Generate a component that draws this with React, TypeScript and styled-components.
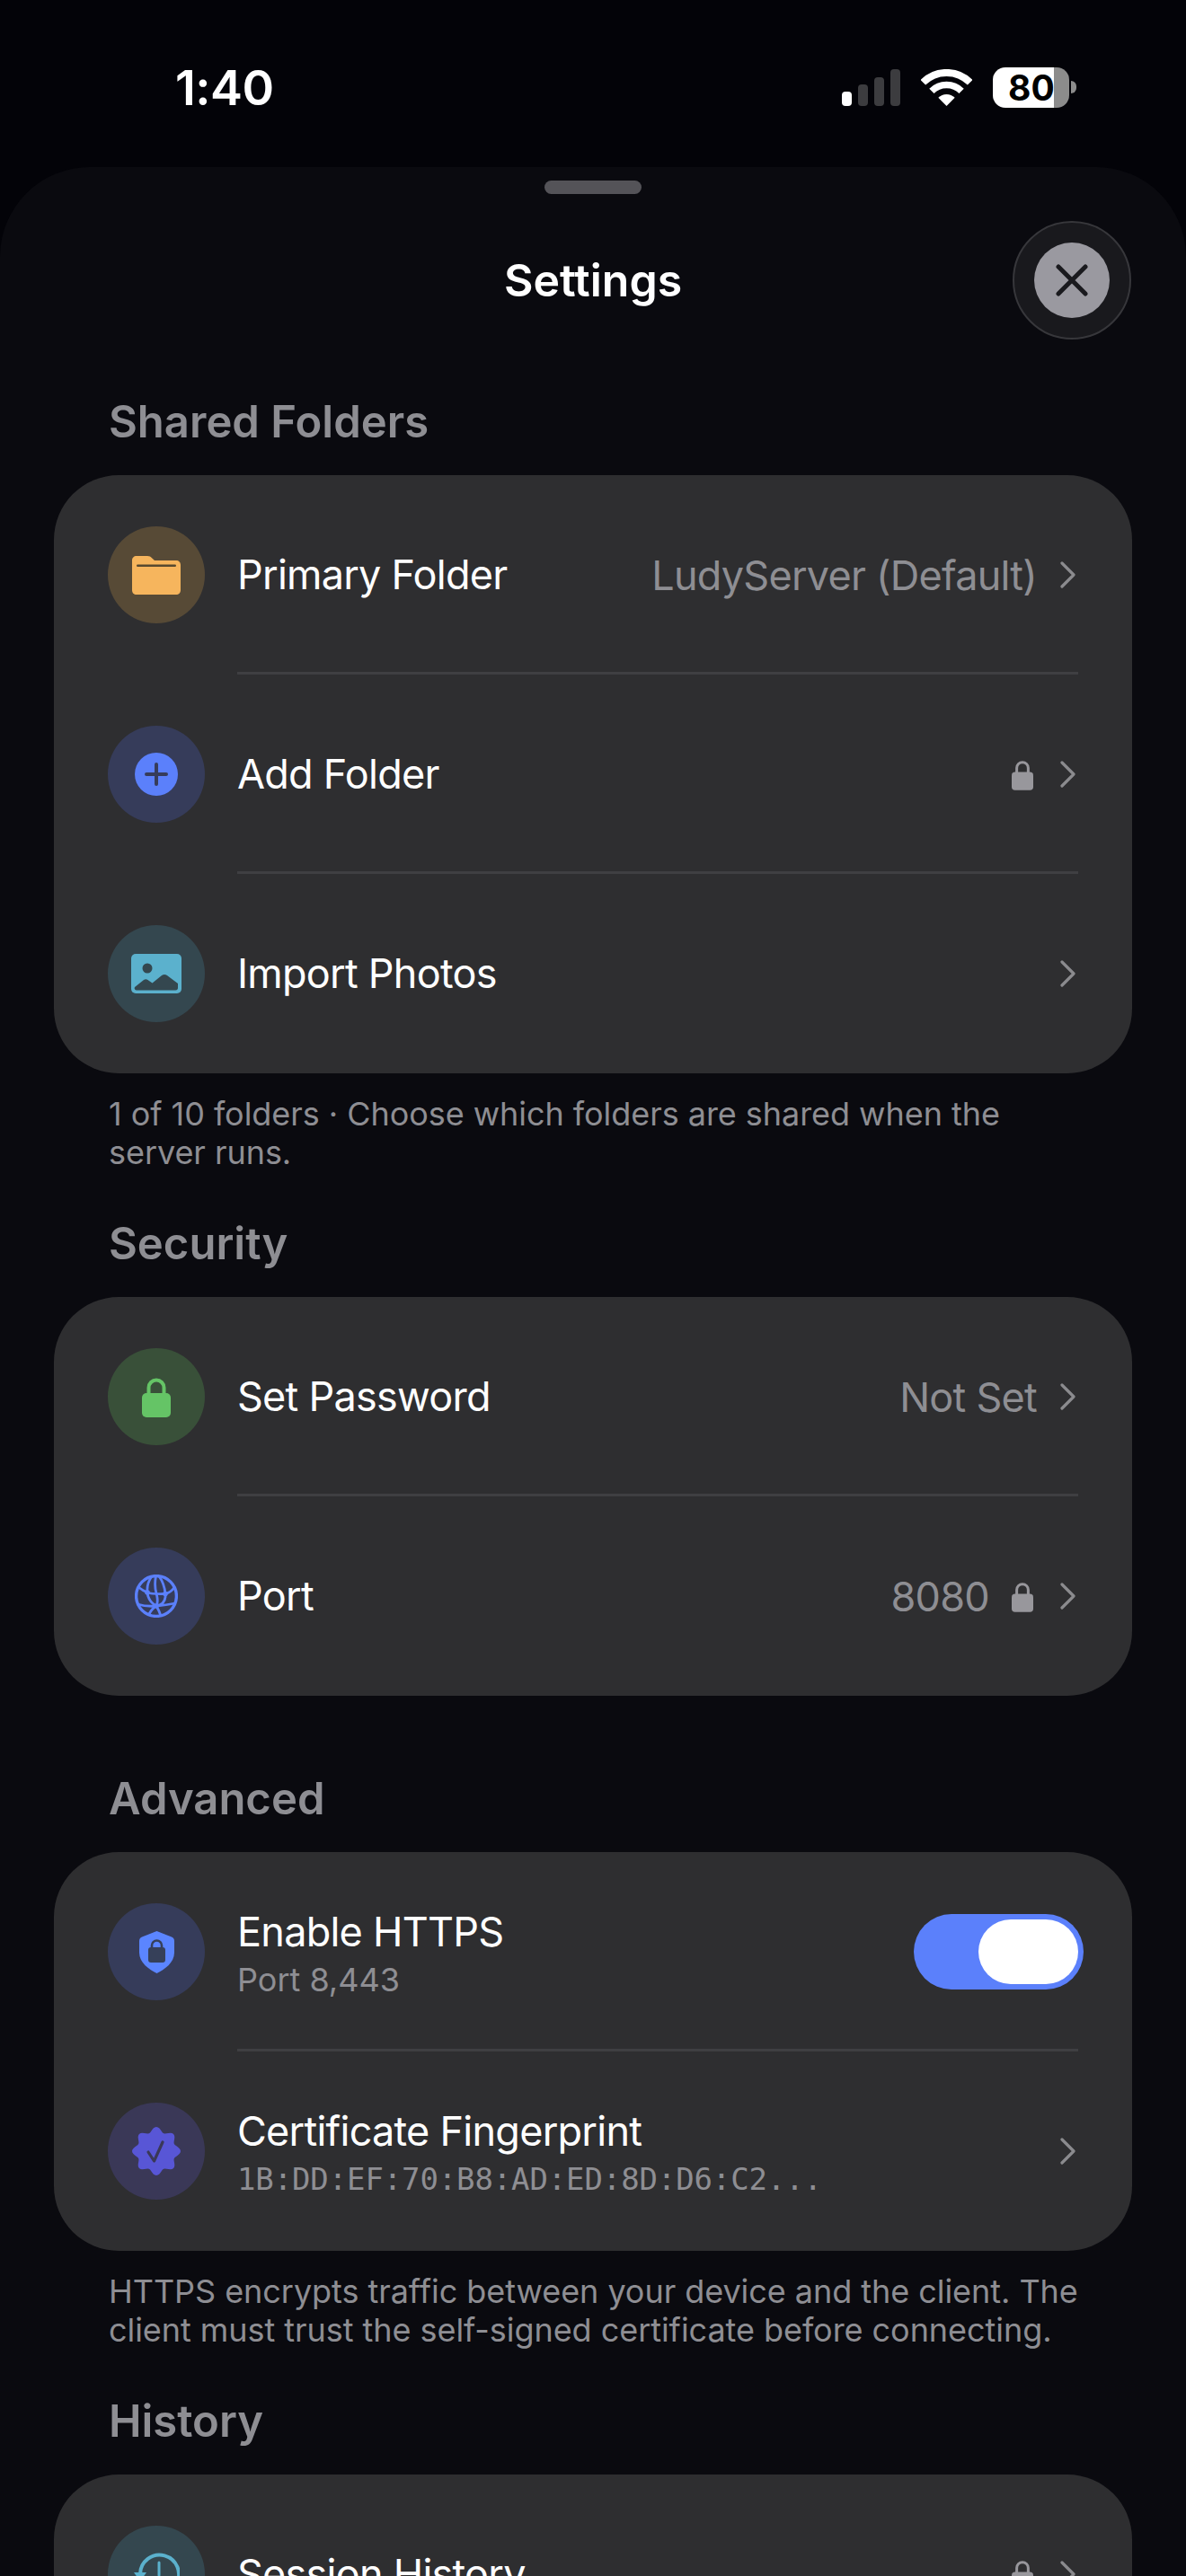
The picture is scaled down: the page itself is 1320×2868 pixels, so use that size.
import { ReactNode } from "react";
import styled, { createGlobalStyle } from "styled-components";

const COLOR_BLUE = "#5b80fb";
const COLOR_TEAL = "#5bb1cd";
const COLOR_GRAY = "#8e8e93";

const GlobalStyle = createGlobalStyle`
  html, body, #root {
    margin: 0;
    padding: 0;
    width: 1320px;
    height: 2868px;
    overflow: hidden;
    background: #030308;
  }
  * {
    box-sizing: border-box;
  }
  body {
    font-family: Inter, "Noto Sans", sans-serif;
    color: #fff;
  }
`;

const FolderIcon = () => (
  <svg width="54" height="43" viewBox="0 0 54 43">
    <path
      d="M5 0h12c2.5 0 3.6.8 5 2.2L25 5h24c3 0 5 2 5 5v28c0 3-2 5-5 5H5c-3 0-5-2-5-5V5c0-3 2-5 5-5z"
      fill="#f6b55d"
    />
    <rect x="5" y="9.5" width="44" height="2.6" rx="1.3" fill="#57492f" />
  </svg>
);

const PlusIcon = () => (
  <svg width="48" height="48" viewBox="0 0 48 48">
    <circle cx="24" cy="24" r="24" fill={COLOR_BLUE} />
    <path d="M24 13v22M13 24h22" stroke="#363c5a" strokeWidth="4" strokeLinecap="round" />
  </svg>
);

const PhotoIcon = () => (
  <svg width="56" height="44" viewBox="0 0 56 44">
    <rect width="56" height="44" rx="5" fill={COLOR_TEAL} />
    <circle cx="18" cy="16" r="5.5" fill="#34474f" />
    <path
      d="M4 37l10-8c1.5-1 3-1 4.5 0l5 3.5L34 24c2-1.5 4-1.5 6 0l12 9v5c0 1.5-1 2.5-2.5 2.5h-43C4.5 40.5 3 39 4 37z"
      fill="#34474f"
    />
  </svg>
);

const LockIcon = ({ color, width, height }: { color: string; width: number; height: number }) => (
  <svg width={width} height={height} viewBox="0 0 32 46">
    <path d="M7.5 22V13a8.5 8.5 0 0 1 17 0v9" fill="none" stroke={color} strokeWidth="4" />
    <rect y="19" width="32" height="27" rx="5" fill={color} />
  </svg>
);

const GlobeIcon = () => (
  <svg width="48" height="48" viewBox="0 0 48 48" fill="none" stroke={COLOR_BLUE} strokeWidth="2.8">
    <circle cx="24" cy="24" r="22.4" strokeWidth="3.4" />
    <path d="M4 14q5 4 10 6t20 1.5q6-1.5 10-7" />
    <path d="M3 33q10 3 21 2t21-3" />
    <path d="M19 2q-6 8-5 18t10 15q3 5 5 11" />
    <path d="M27 2q6 8 7 19.5T24 35q-5 3-8 9" />
    <path d="M23.5 2q-2 10 .5 19t0 14" />
    <circle cx="14" cy="20" r="2.8" fill={COLOR_BLUE} stroke="none" />
    <circle cx="34" cy="21.5" r="2.8" fill={COLOR_BLUE} stroke="none" />
    <circle cx="24" cy="35" r="2.8" fill={COLOR_BLUE} stroke="none" />
  </svg>
);

const ShieldIcon = () => (
  <svg width="39" height="47" viewBox="0 0 39 47">
    <path
      d="M19.5 0L36 6.5Q39 7.7 39 11V24C39 35 28 43 19.5 47 11 43 0 35 0 24V11Q0 7.7 3 6.5z"
      fill="#5b85ff"
    />
    <path d="M14 19v-3a5.5 5.5 0 0 1 11 0v3" fill="none" stroke="#364059" strokeWidth="2.6" />
    <rect x="10" y="18" width="19" height="17" rx="3" fill="#364059" />
  </svg>
);

// eight soft points round a circle, like the iOS verified badge
const sealPath = () => {
  const points: string[] = [];
  for (let i = 0; i < 96; i++) {
    const angle = (i / 96) * Math.PI * 2;
    const radius = 24.2 + 2.8 * Math.cos(angle * 8);
    points.push(`${(27 + radius * Math.sin(angle)).toFixed(2)} ${(27 - radius * Math.cos(angle)).toFixed(2)}`);
  }
  return `M${points.join("L")}Z`;
};

const SealIcon = () => (
  <svg width="54" height="54" viewBox="0 0 54 54">
    <path d={sealPath()} fill="#5856d6" />
    <path
      d="M18 28l6.5 10L34 17"
      fill="none"
      stroke="#3a3857"
      strokeWidth="3.2"
      strokeLinecap="round"
      strokeLinejoin="round"
    />
  </svg>
);

const HistoryIcon = () => (
  <svg width="52" height="48" viewBox="0 0 52 48" fill="none" stroke={COLOR_TEAL} strokeWidth="4">
    <path d="M8 24a21.5 21.5 0 1 1 6 15" strokeLinecap="round" />
    <path d="M29 11v14" strokeLinecap="round" strokeWidth="3" />
    <path d="M1 22h14l-7 10z" fill={COLOR_TEAL} stroke="none" />
  </svg>
);

const Chevron = () => (
  <svg width="17" height="30" viewBox="0 0 17 30" fill="none">
    <path
      d="M2 2l13 13L2 28"
      stroke="#8b8b8e"
      strokeWidth="3.2"
      strokeLinecap="round"
      strokeLinejoin="round"
    />
  </svg>
);

const WifiIcon = () => (
  <svg width="57" height="41" viewBox="0 0 57 41" fill="none" stroke="#fff">
    <path d="M2.3 14.8a37 37 0 0 1 52.4 0" strokeWidth="8" />
    <path d="M11.9 24.4a23.5 23.5 0 0 1 33.2 0" strokeWidth="7.5" />
    <path d="M28.5 41l-9.2-9.2a13 13 0 0 1 18.4 0z" fill="#fff" stroke="none" />
  </svg>
);

interface SettingRowProps {
  icon: ReactNode;
  iconBg: string;
  title: string;
  subtitle?: string;
  mono?: boolean;
  value?: string;
  locked?: boolean;
  toggle?: boolean;
}

const SettingRow = ({ icon, iconBg, title, subtitle, mono, value, locked, toggle }: SettingRowProps) => (
  <Row>
    <IconCircle $bg={iconBg}>{icon}</IconCircle>
    <RowText>
      <RowTitle>{title}</RowTitle>
      {subtitle && <RowSubtitle $mono={mono}>{subtitle}</RowSubtitle>}
    </RowText>
    {toggle ? (
      <Switch>
        <Knob />
      </Switch>
    ) : (
      <RowAccessory>
        {value && <RowValue>{value}</RowValue>}
        {locked && (
          <LockSlot>
            <LockIcon color="#98979c" width={24} height={35} />
          </LockSlot>
        )}
        <Chevron />
      </RowAccessory>
    )}
  </Row>
);

const App = () => (
  <Screen>
    <GlobalStyle />
    <StatusBar>
      <Time>1:40</Time>
      <StatusIcons>
        <Signal>
          <SignalBar $height={16} $active />
          <SignalBar $height={24} />
          <SignalBar $height={32} />
          <SignalBar $height={41} />
        </Signal>
        <WifiIcon />
        <Battery>
          <BatteryBody>80</BatteryBody>
          <BatteryNub />
        </Battery>
      </StatusIcons>
    </StatusBar>
    <Sheet>
      <Handle />
      <Header>
        <Title>Settings</Title>
        <CloseRing>
          <CloseButton>
            <svg width="36" height="36" viewBox="0 0 36 36">
              <path
                d="M3 3l30 30M33 3L3 33"
                stroke="#1a1a1e"
                strokeWidth="5"
                strokeLinecap="round"
              />
            </svg>
          </CloseButton>
        </CloseRing>
      </Header>

      <Section $hasNote>
        <SectionHeading>Shared Folders</SectionHeading>
        <Card>
          <SettingRow
            icon={<FolderIcon />}
            iconBg="#574a36"
            title="Primary Folder"
            value="LudyServer (Default)"
          />
          <Divider />
          <SettingRow icon={<PlusIcon />} iconBg="#363c5a" title="Add Folder" locked />
          <Divider />
          <SettingRow icon={<PhotoIcon />} iconBg="#34474f" title="Import Photos" />
        </Card>
        <Note>1 of 10 folders · Choose which folders are shared when the server runs.</Note>
      </Section>

      <Section>
        <SectionHeading>Security</SectionHeading>
        <Card>
          <SettingRow
            icon={<LockIcon color="#65c466" width={32} height={46} />}
            iconBg="#395039"
            title="Set Password"
            value="Not Set"
          />
          <Divider />
          <SettingRow icon={<GlobeIcon />} iconBg="#363c5a" title="Port" value="8080" locked />
        </Card>
      </Section>

      <Section $hasNote>
        <SectionHeading>Advanced</SectionHeading>
        <Card>
          <SettingRow
            icon={<ShieldIcon />}
            iconBg="#363c5a"
            title="Enable HTTPS"
            subtitle="Port 8,443"
            toggle
          />
          <Divider />
          <SettingRow
            icon={<SealIcon />}
            iconBg="#3a3857"
            title="Certificate Fingerprint"
            subtitle="1B:DD:EF:70:B8:AD:ED:8D:D6:C2..."
            mono
          />
        </Card>
        <Note>
          HTTPS encrypts traffic between your device and the client. The client must trust the
          self-signed certificate before connecting.
        </Note>
      </Section>

      <Section>
        <SectionHeading>History</SectionHeading>
        <Card>
          <SettingRow icon={<HistoryIcon />} iconBg="#34474f" title="Session History" locked />
        </Card>
      </Section>
    </Sheet>
  </Screen>
);

export default App;

const Screen = styled.div`
  width: 1320px;
  height: 2868px;
  overflow: hidden;
  display: flex;
  flex-direction: column;
`;

const StatusBar = styled.div`
  height: 186px;
  flex-shrink: 0;
  display: flex;
  align-items: center;
  justify-content: space-between;
  padding: 10px 122px 0 195px;
`;

const Time = styled.div`
  font-size: 54px;
  font-weight: 600;
  line-height: 60px;
  letter-spacing: -0.5px;
`;

const StatusIcons = styled.div`
  display: flex;
  align-items: center;
  gap: 23px;
  margin-top: -2px;
`;

const Signal = styled.div`
  display: flex;
  align-items: flex-end;
  gap: 7px;
  height: 41px;
`;

const SignalBar = styled.div<{ $height: number; $active?: boolean }>`
  width: 11px;
  height: ${({ $height }) => $height}px;
  border-radius: 4px;
  background: ${({ $active }) => ($active ? "#fff" : "#3c3c3f")};
`;

const Battery = styled.div`
  display: flex;
  align-items: center;
  gap: 2px;
`;

const BatteryBody = styled.div`
  width: 85px;
  height: 45px;
  border-radius: 14px;
  background: linear-gradient(90deg, #fff 80%, #8c8c8c 80%);
  color: #000;
  font-size: 39px;
  font-weight: 700;
  line-height: 45px;
  padding-left: 17px;
`;

const BatteryNub = styled.div`
  width: 6px;
  height: 14px;
  border-radius: 0 6px 6px 0;
  background: #8c8c8c;
`;

const Sheet = styled.div`
  flex: 1;
  background: #0a0a0f;
  border-radius: 100px 100px 0 0;
  padding: 15px 60px 0;
  display: flex;
  flex-direction: column;
`;

const Handle = styled.div`
  width: 108px;
  height: 15px;
  flex-shrink: 0;
  border-radius: 8px;
  background: #545358;
  align-self: center;
`;

const Header = styled.div`
  display: grid;
  grid-template-columns: 132px 1fr 132px;
  align-items: center;
  margin-top: 30px;
  margin-bottom: 62px;
`;

const Title = styled.h1`
  grid-column: 2;
  margin: 0;
  font-size: 50px;
  font-weight: 600;
  line-height: 60px;
  text-align: center;
`;

const CloseRing = styled.div`
  grid-column: 3;
  width: 132px;
  height: 132px;
  margin-left: -1px;
  border-radius: 50%;
  background: #19191d;
  border: 2px solid #37373b;
  display: flex;
  align-items: center;
  justify-content: center;
`;

const CloseButton = styled.div`
  width: 84px;
  height: 84px;
  border-radius: 50%;
  background: #9a99a0;
  display: flex;
  align-items: center;
  justify-content: center;
`;

const Section = styled.section<{ $hasNote?: boolean }>`
  flex-shrink: 0;
  margin-bottom: ${({ $hasNote }) => ($hasNote ? 50 : 85)}px;
`;

const SectionHeading = styled.h2`
  margin: 0 0 29px 61px;
  color: ${COLOR_GRAY};
  font-size: 49px;
  font-weight: 600;
  line-height: 60px;
`;

const Card = styled.div`
  background: #2e2e30;
  border-radius: 72px;
`;

const Row = styled.div`
  height: 222px;
  display: flex;
  align-items: center;
  padding: 0 63px 0 60px;
`;

const IconCircle = styled.div<{ $bg: string }>`
  width: 108px;
  height: 108px;
  flex-shrink: 0;
  border-radius: 50%;
  background: ${({ $bg }) => $bg};
  display: flex;
  align-items: center;
  justify-content: center;
`;

const RowText = styled.div`
  flex: 1;
  min-width: 0;
  margin-left: 36px;
  display: flex;
  flex-direction: column;
`;

const RowTitle = styled.div`
  font-size: 45px;
  letter-spacing: -0.75px;
  line-height: 54px;
`;

const RowSubtitle = styled.div<{ $mono?: boolean }>`
  margin: 4px 0 -4px;
  color: ${COLOR_GRAY};
  font-family: ${({ $mono }) =>
    $mono ? '"DejaVu Sans Mono", "Liberation Mono", monospace' : "Inter, sans-serif"};
  font-size: ${({ $mono }) => ($mono ? 34 : 36)}px;
  letter-spacing: ${({ $mono }) => ($mono ? -0.13 : 0)}px;
  line-height: 44px;
`;

const RowAccessory = styled.div`
  display: flex;
  align-items: center;
  gap: 26px;
`;

const LockSlot = styled.div`
  display: flex;
  margin: 0 4px 0 -1px;
`;

const RowValue = styled.div`
  color: ${COLOR_GRAY};
  font-size: 45px;
  letter-spacing: -0.75px;
`;

const Switch = styled.div`
  width: 189px;
  height: 84px;
  margin-right: -9px;
  padding: 6px;
  border-radius: 42px;
  background: ${COLOR_BLUE};
  display: flex;
  justify-content: flex-end;
`;

const Knob = styled.div`
  width: 111px;
  height: 72px;
  border-radius: 36px;
  background: #fff;
`;

const Divider = styled.div`
  height: 3px;
  margin: -3px 60px 0 204px;
  background: #3f3f42;
`;

const Note = styled.p`
  margin: 24px 0 0 61px;
  color: ${COLOR_GRAY};
  font-size: 36px;
  letter-spacing: -0.05px;
  line-height: 43px;
  width: 1100px;
`;
